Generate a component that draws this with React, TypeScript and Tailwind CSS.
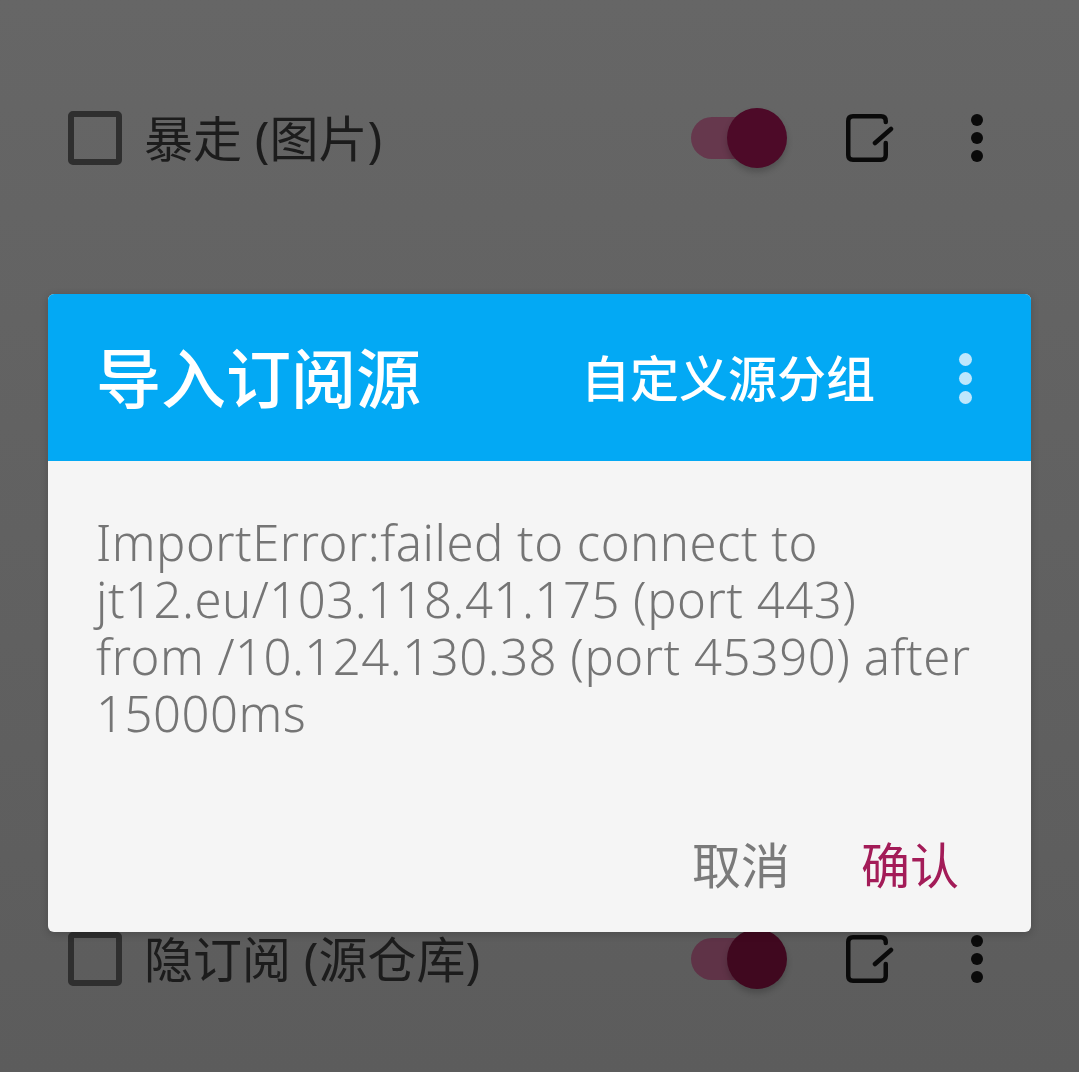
import React from 'react';

const FONT = '"Noto Sans", "Noto Sans CJK SC", sans-serif';

function EditIcon() {
  return (
    <svg width="48" height="48" viewBox="0 0 48 48" fill="none" stroke="#0a0a0a" strokeWidth="4.5" strokeLinecap="round" strokeLinejoin="round">
      <path d="M39.750 8V7Q39.750 2.250 35 2.250H7Q2.250 2.250 2.250 7V41Q2.250 45.750 7 45.750H35Q39.750 45.750 39.750 41V29" />
      <path d="M29 29L45 15" />
    </svg>
  );
}

function Row({ label, dark }: { label: string; dark?: boolean }) {
  return (
    <div className="flex h-[60px] items-center pl-[68px] pr-[96px]">
      <div className="h-[54px] w-[54px] rounded-[5px] border-[6px] border-[#2f2f2f]" />
      <span className="ml-[22px] flex-1 text-[49px] leading-[60px] text-[#1c1c1c]">{label}</span>
      <div className="relative mr-[59px] h-[60px] w-[96px]">
        <div className={`absolute left-0 top-[9px] h-[42px] w-[70px] rounded-full ${dark ? 'bg-[#5f3347]' : 'bg-[#66384d]'}`} />
        <div className={`absolute right-0 top-0 h-[60px] w-[60px] rounded-full shadow-[0_4px_6px_rgba(0,0,0,0.2)] ${dark ? 'bg-[#40081f]' : 'bg-[#4d0a28]'}`} />
      </div>
      <EditIcon />
      <div className="ml-[77px] flex flex-col gap-[6px]">
        <div className="h-[12px] w-[12px] rounded-full bg-[#0a0a0a]" />
        <div className="h-[12px] w-[12px] rounded-full bg-[#0a0a0a]" />
        <div className="h-[12px] w-[12px] rounded-full bg-[#0a0a0a]" />
      </div>
    </div>
  );
}

export default function App() {
  return (
    <div className="relative flex h-[1072px] w-[1079px] flex-col overflow-hidden bg-gradient-to-b from-[#666666] to-[#5c5c5c] pt-[108px]" style={{ fontFamily: FONT }}>
      <Row label="暴走 (图片)" />
      <div className="mt-[761px]">
        <Row label="隐订阅 (源仓库)" dark />
      </div>

      <div className="absolute left-[48px] top-[294px] flex h-[638px] w-[983px] flex-col overflow-hidden rounded-[6px] bg-[#f5f5f5] shadow-[0_2px_8px_rgba(0,0,0,0.2)]">
        <div className="flex h-[167px] items-center bg-[#03a9f4] pl-[48px] pr-[59px] pt-[2px] text-white">
          <span className="flex-1 text-[65px] font-medium">导入订阅源</span>
          <span className="text-[49px] font-medium">自定义源分组</span>
          <div className="ml-[84px] flex flex-col gap-[6px]">
            <div className="h-[13px] w-[13px] rounded-full bg-[#bfe7fc]" />
            <div className="h-[13px] w-[13px] rounded-full bg-[#bfe7fc]" />
            <div className="h-[13px] w-[13px] rounded-full bg-[#bfe7fc]" />
          </div>
        </div>
        <div className="flex-1 px-[48px] pt-[53px]">
          <p className="text-[49px] font-[350] leading-[57px] tracking-[0.5px] text-[#757575]">
            ImportError:failed to connect to jt12.eu/103.118.41.175 (port 443)
            <br />
            from /10.124.130.38 (port 45390) after 15000ms
          </p>
        </div>
        <div className="flex justify-end gap-[71px] pb-[37px] pr-[72px] text-[49px] leading-[60px]">
          <span className="text-[#7a7a7a]">取消</span>
          <span className="text-[#a31c58]">确认</span>
        </div>
      </div>
    </div>
  );
}
